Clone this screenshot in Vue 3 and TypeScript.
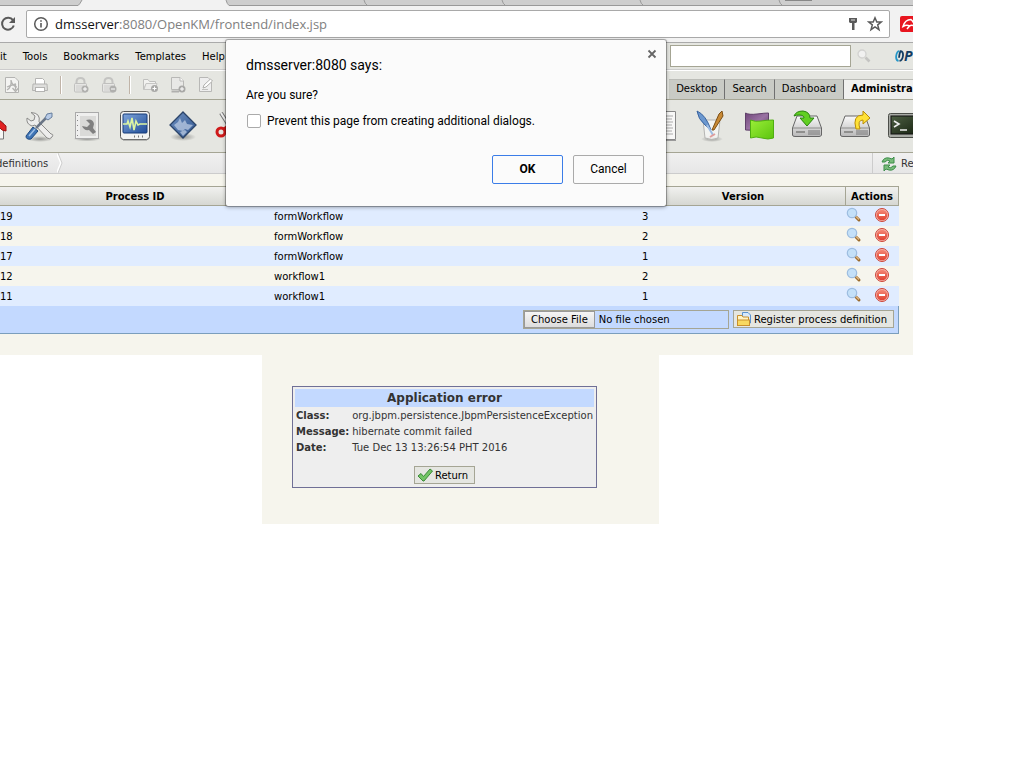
<script setup lang="ts">
import { ref } from 'vue'

interface ProcessRow {
  id: string
  name: string
  version: number
}

const menus: string[] = ['it', 'Tools', 'Bookmarks', 'Templates', 'Help']
const tabs: string[] = ['Desktop', 'Search', 'Dashboard', 'Administra']
const activeTab = ref('Administra')
const query = ref('')
const prevent = ref(false)

const rows: ProcessRow[] = [
  { id: '19', name: 'formWorkflow', version: 3 },
  { id: '18', name: 'formWorkflow', version: 2 },
  { id: '17', name: 'formWorkflow', version: 1 },
  { id: '12', name: 'workflow1', version: 2 },
  { id: '11', name: 'workflow1', version: 1 },
]

const details = [
  { label: 'Class:', value: 'org.jbpm.persistence.JbpmPersistenceException' },
  { label: 'Message:', value: 'hibernate commit failed' },
  { label: 'Date:', value: 'Tue Dec 13 13:26:54 PHT 2016' },
]
</script>

<template>
  <div class="page">
    <svg class="defs" width="0" height="0" aria-hidden="true">
      <defs>
        <linearGradient id="blueG" x1="0" y1="0" x2="1" y2="1"><stop offset="0" stop-color="#7fa5dc" /><stop offset="1" stop-color="#1f4c96" /></linearGradient>
        <linearGradient id="slateG" x1="0" y1="0" x2="1" y2="1"><stop offset="0" stop-color="#6f90bf" /><stop offset="1" stop-color="#2f5590" /></linearGradient>
        <linearGradient id="metalG" x1="0" y1="0" x2="0" y2="1"><stop offset="0" stop-color="#fafafa" /><stop offset="1" stop-color="#b9b9b9" /></linearGradient>
        <linearGradient id="greenG" x1="0" y1="0" x2="1" y2="1"><stop offset="0" stop-color="#9aee38" /><stop offset="1" stop-color="#5cc40e" /></linearGradient>
        <linearGradient id="purpleG" x1="0" y1="0" x2="1" y2="1"><stop offset="0" stop-color="#70467a" /><stop offset=".5" stop-color="#9a73a3" /><stop offset="1" stop-color="#5f3869" /></linearGradient>
        <linearGradient id="termG" x1="0" y1="0" x2="1" y2="1"><stop offset="0" stop-color="#4d5f43" /><stop offset="1" stop-color="#15200f" /></linearGradient>
        <linearGradient id="redG" x1="0" y1="0" x2="0" y2="1"><stop offset="0" stop-color="#f58a78" /><stop offset="1" stop-color="#e0402f" /></linearGradient>
        <radialGradient id="shadeG"><stop offset="0" stop-color="#000" stop-opacity=".35" /><stop offset="1" stop-color="#000" stop-opacity="0" /></radialGradient>
      </defs>
    </svg>

    <div class="window">
      <div class="tabstrip">
        <svg width="1024" height="6" viewBox="0 0 1024 6">
          <path d="M0 0H82L79 5.500H0Z" fill="#cecece" />
          <path d="M226 0H1024V5.500H229Q227 4 226 0Z" fill="#cecece" />
          <path d="M0 5.500H78Q80 4 82 0M226 0Q227 4 229 5.500H1024M364 0Q365 4 367 5M502 0Q503 4 505 5M640 0Q641 4 643 5M779 0Q780 4 782 5" fill="none" stroke="#999" />
          <rect x="785" y="0" width="27" height="1" fill="#888" />
        </svg>
      </div>

      <div class="navbar">
        <button class="plain reload" type="button" aria-label="Reload">
          <svg width="16" height="16" viewBox="0 0 16 16"><path d="M13 4.200A6 6 0 1 0 13.800 9.500" fill="none" stroke="#5a5a5a" stroke-width="2" /><path d="M15 1V7H9Z" fill="#5a5a5a" /></svg>
        </button>
        <div class="omnibox">
          <svg width="16" height="16" viewBox="0 0 16 16"><circle cx="8" cy="8" r="6.300" fill="none" stroke="#5a5a5a" stroke-width="1.500" /><path d="M8 7V11.500M8 4.200V5.800" stroke="#5a5a5a" stroke-width="1.600" /></svg>
          <p class="url"><span>dmsserver</span>:8080/OpenKM/frontend/index.jsp</p>
          <svg width="12" height="14" viewBox="0 0 12 14"><path d="M0 1H8V5L7 6H5.500V13H3V6H1L0 5Z" fill="#5a5a5a" /><path d="M2 3H6" stroke="#ddd" /></svg>
          <svg width="16" height="16" viewBox="0 0 16 16"><path d="M8 1.800L9.800 6H14.300L10.700 8.900L12 13.700L8 11L4 13.700L5.300 8.900L1.700 6H6.200Z" fill="none" stroke="#5a5a5a" stroke-width="1.500" /></svg>
        </div>
        <svg class="avira" width="16" height="16" viewBox="0 0 16 16"><rect width="18" height="16" rx="2" fill="#e8151f" /><path d="M3 10.500Q5 3.500 11 3.500Q14 6 15 10.500Q12 8.500 9.500 10Q6.500 8.500 3 10.500ZM9.500 10L7 13" fill="none" stroke="#fff" stroke-width="1.500" /></svg>
      </div>

      <div class="menubar">
        <nav class="menus">
          <button v-for="m in menus" :key="m" class="plain" type="button">{{ m }}</button>
        </nav>
        <div class="find">
          <input v-model="query" class="search" type="text" aria-label="Search" />
          <svg class="mag" width="14" height="14" viewBox="0 0 14 14"><circle cx="5" cy="5" r="4" fill="#f1f1f0" stroke="#d2d2d0" stroke-width="1.300" /><path d="M8.500 8.500L12.500 12.500" stroke="#c4c4c2" stroke-width="2.600" /></svg>
          <div class="brand">
            <svg width="9" height="14" viewBox="0 0 10 14"><path d="M5 1.500Q2 1.500 1.300 7Q.8 12 4 12.500" fill="none" stroke="#2496c8" stroke-width="2" /><path d="M5 12.500Q8.200 12 8.900 6.500Q9.200 2 6.500 1.500Q5 3 4.500 9" fill="none" stroke="#123d64" stroke-width="2" /></svg>
            <span>P</span>
          </div>
        </div>
      </div>

      <div class="toolbar">
        <div class="tools">
          <button class="plain tool" type="button" aria-label="Export PDF">
            <svg width="16" height="16" viewBox="0 0 16 16"><path d="M1.500.5H11L14.500 4V15.500H1.500Z" fill="#f4f4f2" stroke="#b4b4b2" /><path d="M3 13Q8 10 7 3Q8 9 13 10M3 10Q7 8 12 7M11.500 7V13M8.500 11L11.500 14.500L14.500 11" fill="none" stroke="#b4b4b2" stroke-width="1.300" /></svg>
          </button>
          <button class="plain tool" type="button" aria-label="Print">
            <svg width="16" height="16" viewBox="0 0 16 16"><path d="M3.500 7V1.500H10.500L12.500 3.500V7" fill="#fff" stroke="#b4b4b2" /><path d="M1 7H15L15.500 13.500H.5Z" fill="#dededc" stroke="#b4b4b2" /><rect x="3.500" y="10.500" width="9" height="4" fill="#fff" stroke="#b4b4b2" /></svg>
          </button>
          <i class="sep"></i>
          <button v-for="lock in ['add', 'remove']" :key="lock" class="plain tool" type="button" :aria-label="lock + ' lock'">
            <svg width="16" height="16" viewBox="0 0 16 16"><path d="M3.500 7V5Q3.500 1 7.500 1T11.500 5V7" fill="none" stroke="#c4c4c2" stroke-width="2" /><rect x="1.500" y="6.500" width="12" height="8.500" rx="1" fill="#e6e6e4" stroke="#c0c0be" /><path d="M3 9H11M3 11H9M3 13H8" stroke="#cececc" /><circle cx="12" cy="12" r="3.500" fill="#b0b0ae" /><path v-if="lock === 'add'" d="M12 10V14" stroke="#fff" /><path d="M10 12H14" stroke="#fff" /></svg>
          </button>
          <i class="sep"></i>
          <button class="plain tool" type="button" aria-label="New folder">
            <svg width="16" height="16" viewBox="0 0 16 16"><path d="M1.500 12.500V2.500H6L7.500 4.500H13.500V7H4Z" fill="#f2f2f0" stroke="#c0c0be" /><path d="M2 12.500L4 6.500H15L13.500 12.500Z" fill="#ececea" stroke="#c6c6c4" /><circle cx="12.500" cy="11.500" r="3.500" fill="#a8a8a6" /><path d="M12.500 9.500V13.500M10.500 11.500H14.500" stroke="#fff" /></svg>
          </button>
          <button class="plain tool" type="button" aria-label="New document">
            <svg width="16" height="16" viewBox="0 0 16 16"><path d="M1.500.5H10L13.500 4V12.500H1.500Z" fill="#e8e8e6" stroke="#b8b8b6" /><path d="M10 .5V4H13.500" fill="#fff" stroke="#b8b8b6" /><path d="M1.500 14.500H9" stroke="#b0b0ae" stroke-width="2" /><circle cx="12" cy="12" r="3.500" fill="#a8a8a6" /><path d="M12 10V14M10 12H14" stroke="#fff" /></svg>
          </button>
          <button class="plain tool" type="button" aria-label="Edit">
            <svg width="16" height="16" viewBox="0 0 16 16"><path d="M1.500.5H10L13.500 4V14.500H1.500Z" fill="#eee" stroke="#b8b8b6" /><path d="M5 11L6 8L12.500 2L14.500 4L8 10Z" fill="#fff" stroke="#b0b0ae" /><path d="M4 12.500H10" stroke="#c2c2c0" /></svg>
          </button>
        </div>
        <div class="apptabs">
          <button v-for="t in tabs" :key="t" type="button" class="apptab" :class="{ active: t === activeTab }" @click="activeTab = t">{{ t }}</button>
        </div>
      </div>

      <div class="admin">
        <div class="group left">
          <button class="plain big" type="button" aria-label="Home">
            <svg width="32" height="32" viewBox="0 0 32 32"><path d="M6 15V29H28.500V13L16 5Z" fill="#f7f7f5" stroke="#777" /><path d="M3 17L16 3L31 16V21L27 20L16 9L5 20Z" fill="#e12222" stroke="#9d1010" /><path d="M21 29V19H25V29" fill="#ddd" /></svg>
          </button>
          <button class="plain big" type="button" aria-label="Utilities">
            <svg width="32" height="32" viewBox="0 0 32 32"><ellipse cx="17" cy="29" rx="13" ry="3" fill="url(#shadeG)" /><path d="M8 2.500L12 6L11 10L8 11L4 8Q3 14 9 16L12 15L24 28Q27 30 29 27T28 24L16 12Q18 3 8 2.500Z" fill="#ededec" stroke="#8b8b89" /><path d="M13 18L23 8" stroke="#6b7686" stroke-width="2.500" /><path d="M22 8L24 4L29 3V7L25 10Z" fill="#b8cbe6" stroke="#667e9e" /><path d="M3 26L10 17L15 21L8 29Q3 30 3 26Z" fill="#3f75b5" stroke="#1e487f" /><path d="M6 26L12 19" stroke="#9fc0e6" stroke-width="1.500" /></svg>
          </button>
          <button class="plain big" type="button" aria-label="Preferences">
            <svg width="32" height="32" viewBox="0 0 32 32"><ellipse cx="16" cy="29" rx="14" ry="2.500" fill="url(#shadeG)" /><rect x="4.500" y="2.500" width="23" height="26" fill="#efefee" stroke="#aaa" /><path d="M6.500 5V27" stroke="#888" stroke-dasharray="1 4" /><rect x="9" y="6" width="16" height="20" fill="#dadad8" /><path d="M15 10Q22 8 23 14L22 18L25 22L22 24L18 20Q13 21 11 16L16 17L19 14Z" fill="#808080" /></svg>
          </button>
          <button class="plain big" type="button" aria-label="Activity">
            <svg width="32" height="32" viewBox="0 0 32 32"><rect x="1.500" y="1.500" width="29" height="28" rx="3" fill="#f3f3f2" stroke="#555" /><rect x="4" y="4" width="24" height="19" rx="1" fill="url(#blueG)" stroke="#153a78" /><path d="M4 14H8L9 11L11 17L13 8L15 20L17 11L19 15L21 14H28" fill="none" stroke="#dcf5a2" stroke-width="1.600" /><path d="M15 26.500H16M19 26.500H20M23 26.500H24" stroke="#777" stroke-width="2" /><path d="M4 30H28" stroke="#888" /></svg>
          </button>
          <button class="plain big" type="button" aria-label="Workflow">
            <svg width="32" height="32" viewBox="0 0 32 32"><ellipse cx="16" cy="27" rx="13" ry="4" fill="url(#shadeG)" /><path d="M16 2L29 15L16 28L3 15Z" fill="url(#slateG)" stroke="#2b4469" stroke-width="1.300" /><path d="M7 15L11 12L13 8L15 13L18 10L20 14L26 15L21 20L18 19L16 21L11 20Z" fill="#b4c6df" opacity=".8" /><path d="M13 22L18 20L20 22L16 26Z" fill="#b4c6df" opacity=".8" /></svg>
          </button>
          <button class="plain big" type="button" aria-label="Cut">
            <svg width="32" height="32" viewBox="0 0 32 32"><path d="M6 3L18 22M25 3L12 22" stroke="#777" stroke-width="4" /><path d="M6 3L18 22M25 3L12 22" stroke="#eee" stroke-width="2" /><circle cx="6" cy="22" r="4" fill="none" stroke="#cf1a1a" stroke-width="3" /><path d="M9 19L17 13" stroke="#cf1a1a" stroke-width="3" /></svg>
          </button>
        </div>
        <div class="group right">
          <button class="plain big" type="button" aria-label="Log">
            <svg width="32" height="32" viewBox="0 0 32 32"><path d="M5 1.500H28.500V29.500H5Z" fill="#f8f8f7" stroke="#888" /><path d="M8 6H26M8 9H25M8 12H26M8 15H25M8 18H26M8 21H25M8 24H26" stroke="#aaa" /><path d="M5 30.500H29" stroke="#999" /></svg>
          </button>
          <button class="plain big" type="button" aria-label="Appearance">
            <svg width="32" height="32" viewBox="0 0 32 32"><ellipse cx="17" cy="29" rx="11" ry="3" fill="url(#shadeG)" /><path d="M8 10H25L23 28Q17 31 10 28Z" fill="#f4f4f3" fill-opacity=".85" stroke="#b5b5b3" /><path d="M2 1Q11 5 16 20L10 15Q3 9 2 1Z" fill="#6c98cf" stroke="#3a649f" /><path d="M12 15L18 25" stroke="#9dbce3" stroke-width="2" /><path d="M27 1L28 6L19 20L17 20L24 4Z" fill="#c88a36" stroke="#7d4f14" /><path d="M15 27L20 24" stroke="#df9d9d" stroke-width="2" /></svg>
          </button>
          <button class="plain big" type="button" aria-label="Language">
            <svg width="32" height="32" viewBox="0 0 32 32"><path d="M2.500 3Q6 5 14 4T25.500 3V20Q20 22 14 21T2.500 20Z" fill="url(#purpleG)" stroke="#60416a" /><path d="M7.500 10Q12 12 18 11T30.500 10V28Q25 30 19 28T7.500 28Z" fill="url(#greenG)" stroke="#4fae12" /></svg>
          </button>
          <button v-for="dir in ['Import', 'Export']" :key="dir" class="plain big" type="button" :aria-label="dir">
            <svg width="32" height="32" viewBox="0 0 32 32"><path d="M6 6H26L30.500 18V25Q30 26.500 28 26.500H4Q1.500 26.500 1.500 25V18Z" fill="url(#metalG)" stroke="#666" /><path d="M2 18H30" stroke="#8c8c8a" /><path d="M5 22H14" stroke="#8f8f8d" stroke-width="2" /><path d="M18 20V25M20 20V25M22 20V25M24 20V25M26 20V25M28 20V25" stroke="#777" /><path v-if="dir === 'Import'" d="M3 6Q5 1 12 1Q19 2 19 8H23L16 16L9 8H13Q13 5 8 5Q5 5 3 6Z" fill="#61cf22" stroke="#28840c" /><path v-else d="M17 19Q13 5 24 5V1L31 8L24 14V10Q18 10 21 19Z" fill="#ffe238" stroke="#b98c06" /></svg>
          </button>
          <button class="plain big" type="button" aria-label="Scripting">
            <svg width="32" height="32" viewBox="0 0 32 32"><rect x="1.500" y="3.500" width="32" height="24" rx="2" fill="#a8aba5" stroke="#4c4e49" /><rect x="4" y="6" width="30" height="18" fill="url(#termG)" stroke="#111" /><path d="M7 11L12 14L7 17M13 20H20" fill="none" stroke="#eee" stroke-width="1.600" /></svg>
          </button>
        </div>
      </div>

      <div class="crumbs">
        <span class="crumb">definitions</span>
        <svg class="chev" width="6" height="20" viewBox="0 0 6 20"><path d="M0 0L4 10L0 20" fill="none" stroke="#fff" stroke-width="2" /><path d="M1 0L5 10L1 20" fill="none" stroke="#ccc" /></svg>
        <button class="plain refresh" type="button">
          <svg width="16" height="16" viewBox="0 0 16 16"><path d="M1 6Q3 1 8 2L11 3L13 1V7H7L9 5Q6 3 4 6Z" fill="#78bb7b" stroke="#3c8d49" /><path d="M15 10Q13 15 8 14L5 13L3 15V9H9L7 11Q10 13 12 10Z" fill="#78bb7b" stroke="#3c8d49" /></svg>
          Re
        </button>
      </div>

      <main class="content">
        <table class="grid">
          <colgroup><col class="c-id" /><col class="c-name" /><col class="c-ver" /><col class="c-act" /></colgroup>
          <thead>
            <tr><th>Process ID</th><th></th><th>Version</th><th>Actions</th></tr>
          </thead>
          <tbody>
            <tr v-for="r in rows" :key="r.id">
              <td>{{ r.id }}</td>
              <td>{{ r.name }}</td>
              <td>{{ r.version }}</td>
              <td>
                <div class="acts">
                  <a href="#" aria-label="View"><svg width="16" height="16" viewBox="0 0 16 16"><path d="M10 10L13 13" stroke="#9a6a2c" stroke-width="3" stroke-linecap="round" /><path d="M10 9.500L13 12.500" stroke="#e0b884" stroke-width="1.200" /><circle cx="6" cy="6" r="4.700" fill="#c4e0f8" stroke="#9dbde0" stroke-width="1.200" /></svg></a>
                  <a href="#" aria-label="Delete"><svg width="16" height="16" viewBox="0 0 16 16"><circle cx="8" cy="8" r="6.500" fill="#f7b7ae" stroke="#cc4538" /><circle cx="8" cy="8" r="5.300" fill="url(#redG)" /><rect x="5" y="7" width="6" height="2" fill="#fff" /></svg></a>
                </div>
              </td>
            </tr>
          </tbody>
        </table>
        <form class="upload" @submit.prevent>
          <input class="file" type="file" aria-label="Process definition file" />
          <button class="btn" type="submit">
            <svg width="16" height="16" viewBox="0 0 16 16"><path d="M6.500.5H12L14.500 3V11H6.500Z" fill="#d7e9fb" stroke="#5b93cf" /><path d="M1.500 13.500V3.500H6L7 5H12.500V9" fill="#fff3c4" stroke="#c98f2c" /><rect x="1.500" y="8" width="12" height="5.500" fill="#f8d860" stroke="#c98f2c" /></svg>
            Register process definition
          </button>
        </form>
      </main>

      <section class="dialog" role="dialog" aria-labelledby="dlg-title">
        <header class="dlg-head">
          <h1 id="dlg-title">dmsserver:8080 says:</h1>
          <button class="plain close" type="button" aria-label="Close">
            <svg width="10" height="10" viewBox="0 0 10 10"><path d="M1.500 1.500L8.500 8.500M8.500 1.500L1.500 8.500" stroke="#666" stroke-width="1.800" /></svg>
          </button>
        </header>
        <p class="ask">Are you sure?</p>
        <label class="prevent"><input v-model="prevent" type="checkbox" />Prevent this page from creating additional dialogs.</label>
        <div class="dlg-actions">
          <button class="dbtn ok" type="button">OK</button>
          <button class="dbtn" type="button">Cancel</button>
        </div>
      </section>
    </div>

    <section class="error-page">
      <div class="error-box">
        <h2>Application error</h2>
        <table class="details">
          <tbody>
            <tr v-for="d in details" :key="d.label">
              <th scope="row">{{ d.label }}</th>
              <td>{{ d.value }}</td>
            </tr>
          </tbody>
        </table>
        <button class="btn return" type="button">
          <svg width="16" height="16" viewBox="0 0 16 16"><path d="M1 8L4 5.500L6.500 8.500L13 1L15.500 3L7 13H6Z" fill="#72c464" stroke="#3b8a38" /></svg>
          Return
        </button>
      </div>
    </section>
  </div>
</template>

<style>
html,
body {
  margin: 0;
  background: #fff;
}
</style>

<style scoped>
* {
  box-sizing: border-box;
}
.page {
  font: 10px/16px Verdana, 'DejaVu Sans', sans-serif;
  color: #000;
  overflow: hidden;
}
.defs {
  position: absolute;
}
svg {
  display: block;
  flex: none;
}
p,
h1,
h2 {
  margin: 0;
}
.window {
  position: relative;
  margin-right: 111px;
  overflow: hidden;
  background: #f6f5ed;
}
.plain {
  border: 0;
  padding: 0;
  margin: 0;
  background: none;
  font: inherit;
  color: inherit;
}
.tabstrip {
  height: 6px;
  overflow: hidden;
  background: #f2f2f2;
}
.navbar {
  display: flex;
  align-items: center;
  height: 37px;
  padding-bottom: 1px;
  background: #f2f2f2;
  border-bottom: 1px solid #aaa;
}
.reload {
  width: 26px;
}
.omnibox {
  flex: 1;
  display: flex;
  align-items: center;
  gap: 6px;
  height: 28px;
  padding: 0 6px;
  border: 1px solid #a9a9a9;
  border-radius: 2px;
  background: #fff;
}
.url {
  flex: 1;
  font: 13px/20px 'Segoe UI', 'Open Sans', sans-serif;
  color: #808080;
}
.url span {
  color: #111;
}
.avira {
  margin: 0 -3px 0 10px;
}
.menubar {
  display: flex;
  align-items: center;
  justify-content: space-between;
  height: 27px;
  background: #e5e6e1;
  border-bottom: 1px solid #ccc;
}
.menus {
  display: flex;
  gap: 16px;
  padding-top: 2px;
}
.find {
  display: flex;
  align-items: center;
}
.search {
  width: 181px;
  height: 22px;
  border: 1px solid #a5a594;
  background: #fff;
  font: inherit;
}
.mag {
  margin: 0 24px 0 6px;
}
.brand {
  display: flex;
  align-items: center;
  width: 18px;
  font: italic bold 14px/16px 'Open Sans', sans-serif;
  color: #123d64;
}
.toolbar {
  display: flex;
  align-items: flex-end;
  justify-content: space-between;
  height: 30px;
  background: #e5e6e1;
  border-top: 1px solid #fff;
  border-bottom: 1px solid #a5a594;
}
.tools {
  display: flex;
  align-items: center;
  gap: 12px;
  height: 28px;
  padding: 0 0 1px 4px;
}
.sep {
  width: 2px;
  height: 18px;
  margin: 0 -3px 0 0;
  background: #c0b4a8;
  border-right: 1px solid #fff;
}
.sep + .tool {
  margin-left: 2px;
}
.apptabs {
  display: flex;
}
.apptab {
  height: 20px;
  padding: 0 7px 2px;
  border: 0;
  border-top: 1px solid #bcbdb8;
  border-right: 1px solid #707070;
  background: #c9cbc5;
  font: inherit;
}
.apptab.active {
  width: 69px;
  border-right: 0;
  background: #f0f0ee;
  font-weight: bold;
  white-space: nowrap;
}
.admin {
  display: flex;
  justify-content: space-between;
  align-items: center;
  height: 53px;
  background: #e5e6e1;
  border-bottom: 1px solid #a5a594;
}
.group {
  display: flex;
}
.left {
  margin-left: -33px;
}
.right {
  margin-right: -14px;
}
.big {
  display: flex;
  justify-content: center;
  width: 48px;
}
.crumbs {
  display: flex;
  align-items: center;
  height: 21px;
  background: linear-gradient(#f0f0f0, #e6e6e6);
  border-bottom: 1px solid #ccc;
  color: #333;
}
.crumb {
  margin-left: -4px;
  padding-top: 2px;
}
.chev {
  margin-left: 9px;
}
.refresh {
  display: flex;
  align-items: center;
  gap: 4px;
  height: 20px;
  width: 41px;
  padding: 2px 0 0 8px;
  margin-left: auto;
  border-left: 1px solid #ccc;
}
.content {
  height: 181px;
  padding: 12px 14px 0 0;
}
.grid {
  width: calc(100% + 2px);
  margin-left: -2px;
  table-layout: fixed;
  border-collapse: separate;
  border-spacing: 0;
}
.c-id {
  width: 274px;
}
.c-ver {
  width: 204px;
}
.c-act {
  width: 54px;
}
.grid th {
  height: 20px;
  padding: 2px 0 0;
  border: solid #a5a594;
  border-width: 1px 0;
  background: linear-gradient(#f1f1ef, #d6d7d2);
}
.grid th:last-child {
  border-width: 1px;
}
.grid td {
  height: 20px;
  padding: 2px 0 0 2px;
}
.grid td:nth-child(3) {
  padding-left: 1px;
}
.grid td:last-child {
  padding: 1px 0 0 1px;
}
.grid tbody tr:nth-child(odd) td {
  background: #e0ecff;
}
.acts {
  display: flex;
  gap: 12px;
  height: 19px;
}
.upload {
  display: flex;
  justify-content: flex-end;
  gap: 4px;
  height: 28px;
  padding: 4px 4px 0 0;
  background: #c3d9ff;
  border: solid #7b9ebd;
  border-width: 0 1px 1px 0;
}
.file {
  width: 206px;
  height: 19px;
  border: 1px solid #a5a594;
  font: inherit;
}
.file::file-selector-button {
  height: 17px;
  margin: 0 4px 0 0;
  padding: 0 6px;
  border: 1px solid #999;
  background: linear-gradient(#f5f5f5, #ddd);
  font: inherit;
}
.btn {
  display: flex;
  align-items: center;
  gap: 2px;
  height: 18px;
  padding: 1px 6px 0 2px;
  border: 1px solid #a5a594;
  background: #e5e6e1;
  font: inherit;
  color: #000;
}
.dialog {
  position: absolute;
  left: 226px;
  top: 40px;
  width: 440px;
  height: 166px;
  padding: 15px 22px 0 20px;
  border-radius: 2px;
  background: #fbfbfb;
  box-shadow: 0 0 0 1px rgba(0, 0, 0, 0.25), 0 1px 4px rgba(0, 0, 0, 0.4);
  font: 12px/20px 'Segoe UI', Roboto, sans-serif;
}
.dlg-head {
  display: flex;
  justify-content: space-between;
}
.dlg-head h1 {
  font-size: 14px;
  font-weight: normal;
  line-height: 20px;
}
.close {
  height: 10px;
  margin: -6px -13px 0 0;
}
.ask {
  margin-top: 10px;
}
.prevent {
  display: flex;
  align-items: center;
  gap: 6px;
  margin-top: 6px;
}
.prevent input {
  appearance: none;
  width: 14px;
  height: 14px;
  margin: 0 0 0 1px;
  border: 1px solid #aaa;
  border-radius: 2px;
  background: #fff;
}
.dlg-actions {
  display: flex;
  justify-content: flex-end;
  gap: 10px;
  margin-top: 24px;
}
.dbtn {
  width: 71px;
  height: 29px;
  padding: 0 2px 2px;
  border: 1px solid #aaa;
  border-radius: 2px;
  background: #fbfbfb;
  font: inherit;
}
.ok {
  border-color: #3b7de8;
  font-weight: bold;
}
.error-page {
  width: 397px;
  margin-left: 262px;
  padding: 31px 62px 36px 30px;
  background: #f6f5ed;
}
.error-box {
  padding: 2px 2px 3px;
  border: 1px solid #6f6f96;
  background: #eee;
  color: #333;
}
.error-box h2 {
  background: #c3d9ff;
  font-size: 12px;
  line-height: 18px;
  text-align: center;
}
.details {
  border-spacing: 0;
  margin: 1px 0 10px;
}
.details th,
.details td {
  padding: 0 1px;
  text-align: left;
  white-space: nowrap;
}
.details th {
  width: 57px;
}
.return {
  margin: 0 auto;
}
</style>
